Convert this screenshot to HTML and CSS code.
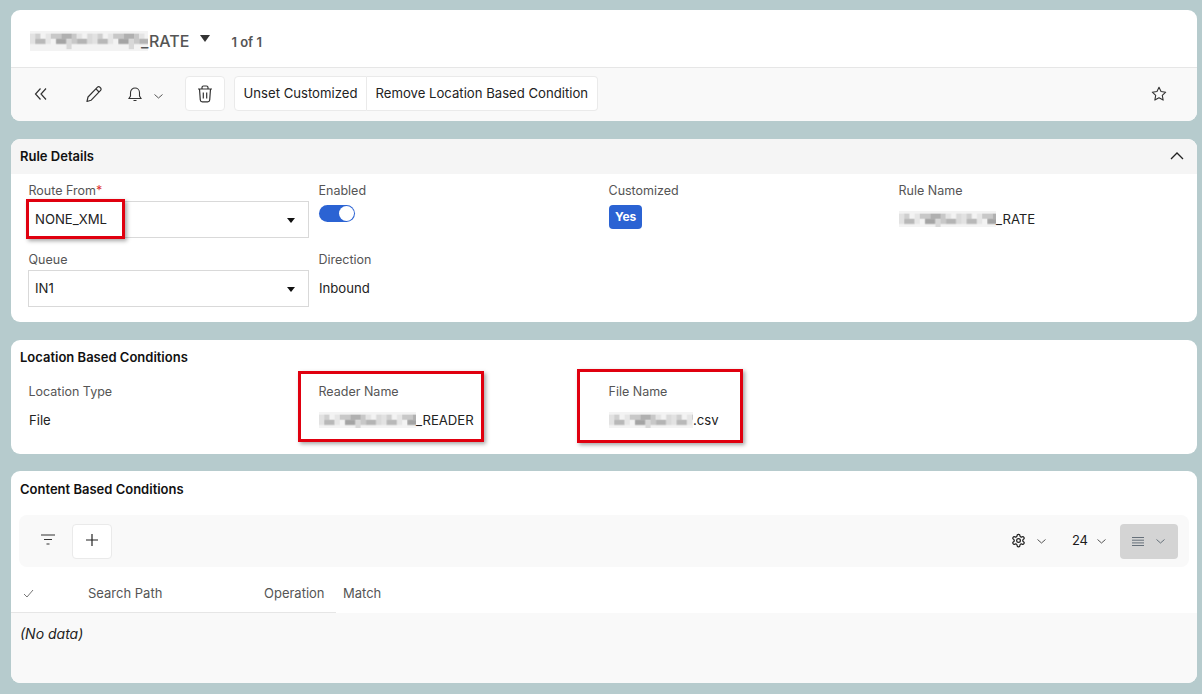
FILE: index.html
```html
<!DOCTYPE html>
<html lang="en">
<head>
  <meta charset="UTF-8">
  <title>Routing Rule</title>
  <link rel="stylesheet" href="styles.css">
</head>
<body>
  <svg class="defs" width="0" height="0" aria-hidden="true">
    <defs>
      <pattern id="mosaic" width="48" height="14" patternUnits="userSpaceOnUse" patternTransform="scale(1.3)">
        <rect width="48" height="14" fill="#f3f3f3"/>
        <rect x="0" y="2" width="4" height="8" fill="#e2e2e2"/>
        <rect x="4" y="2" width="4" height="4" fill="#cfcfcf"/>
        <rect x="4" y="6" width="8" height="4" fill="#b8b8b8"/>
        <rect x="12" y="2" width="4" height="8" fill="#e6e6e6"/>
        <rect x="16" y="2" width="8" height="4" fill="#c8c8c8"/>
        <rect x="20" y="6" width="8" height="4" fill="#a4a4a4"/>
        <rect x="24" y="2" width="8" height="4" fill="#b0b0b0"/>
        <rect x="28" y="6" width="4" height="8" fill="#d8d8d8"/>
        <rect x="32" y="2" width="4" height="8" fill="#c8c8c8"/>
        <rect x="36" y="2" width="4" height="4" fill="#e4e4e4"/>
        <rect x="36" y="6" width="8" height="4" fill="#b4b4b4"/>
        <rect x="44" y="2" width="4" height="8" fill="#dadada"/>
      </pattern>
    </defs>
  </svg>

  <section class="card title-card">
    <div class="title-row">
      <svg class="mosaic title-mosaic" width="118" height="20"><rect width="118" height="20" fill="url(#mosaic)"/></svg>
      <span class="title-text">_RATE</span>
      <svg class="title-caret" width="10" height="7" viewBox="0 0 10 7"><path d="M0 0h10L5 7z" fill="#333"/></svg>
      <span class="count">1 of 1</span>
    </div>
    <div class="toolbar">
      <button class="icon-plain back">
        <svg width="14" height="14" viewBox="0 0 14 14" fill="none" stroke="#333" stroke-width="1.2"><path d="M6.5 1.5 1.5 7l5 5.5M12 1.5 7 7l5 5.5"/></svg>
      </button>
      <button class="icon-plain edit">
        <svg width="18" height="18" viewBox="0 0 18 18" fill="none" stroke="#333" stroke-width="1.2" stroke-linejoin="round"><path d="M2 16.500 3 12 12.500 2.200a1.600 1.600 0 0 1 2.300 0l.8.800a1.600 1.600 0 0 1 0 2.300L6 15.300z"/><path d="M11 3.800 14 7"/></svg>
      </button>
      <button class="icon-plain bell">
        <svg width="14" height="16" viewBox="0 0 14 16" fill="none" stroke="#333" stroke-width="1.1"><path d="M1 12.500h12l-1.500-2.500V6.500a4.500 4.500 0 0 0-9 0V10z"/><path d="M5.500 14.500h3"/></svg>
        <svg class="chev" width="9" height="5" viewBox="0 0 9 5" fill="none" stroke="#555"><path d="m.5.500 4 3.500 4-3.500"/></svg>
      </button>
      <button class="btn trash">
        <svg width="16" height="18" viewBox="0 0 16 18" fill="none" stroke="#333" stroke-width="1.2"><path d="M1 4h14M5 4V2.500A1.500 1.500 0 0 1 6.500 1h3A1.500 1.500 0 0 1 11 2.500V4M2.500 4l.8 11a2 2 0 0 0 2 1.800h5.400a2 2 0 0 0 2-1.800l.8-11M6.300 7.500v6M9.700 7.500v6"/></svg>
      </button>
      <div class="btn-group">
        <button class="btn text-btn">Unset Customized</button>
        <button class="btn text-btn">Remove Location Based Condition</button>
      </div>
      <button class="icon-plain star">
        <svg width="16" height="16" viewBox="0 0 16 16" fill="none" stroke="#333" stroke-width="1.1" stroke-linejoin="round"><path d="m8 1.300 2.050 4.250 4.650.65-3.400 3.250.85 4.650L8 11.850 3.850 14.100l.85-4.650L1.300 6.200l4.650-.65z"/></svg>
      </button>
    </div>
  </section>

  <section class="card details-card">
    <header class="card-head">
      <h2>Rule Details</h2>
      <svg width="14" height="8" viewBox="0 0 14 8" fill="none" stroke="#222" stroke-width="1.300"><path d="m1 7 6-6 6 6"/></svg>
    </header>
    <div class="fields">
      <div class="field">
        <label>Route From<span class="req">*</span></label>
        <div class="select">NONE_XML<i class="caret"></i></div>
        <div class="mark mark-route"></div>
      </div>
      <div class="field">
        <label>Enabled</label>
        <div class="toggle"><span class="knob"></span></div>
      </div>
      <div class="field">
        <label>Customized</label>
        <span class="badge">Yes</span>
      </div>
      <div class="field">
        <label>Rule Name</label>
        <div class="value"><svg class="mosaic" width="97" height="16"><rect width="97" height="16" fill="url(#mosaic)"/></svg>_RATE</div>
      </div>
      <div class="field">
        <label>Queue</label>
        <div class="select">IN1<i class="caret"></i></div>
      </div>
      <div class="field">
        <label>Direction</label>
        <div class="value">Inbound</div>
      </div>
    </div>
  </section>

  <section class="card location-card">
    <h2 class="plain-head">Location Based Conditions</h2>
    <div class="fields">
      <div class="field">
        <label>Location Type</label>
        <div class="value">File</div>
      </div>
      <div class="field">
        <label>Reader Name</label>
        <div class="value"><svg class="mosaic" width="97" height="16"><rect width="97" height="16" fill="url(#mosaic)"/></svg>_READER</div>
        <div class="mark mark-reader"></div>
      </div>
      <div class="field">
        <label>File Name</label>
        <div class="value"><svg class="mosaic" width="84" height="16"><rect width="84" height="16" fill="url(#mosaic)"/></svg>.csv</div>
        <div class="mark mark-file"></div>
      </div>
    </div>
  </section>

  <section class="card content-card">
    <h2 class="plain-head">Content Based Conditions</h2>
    <div class="grid-bar">
      <svg class="filter" width="14" height="11" viewBox="0 0 14 11" fill="none" stroke="#333" stroke-width="1.200"><path d="M0 1h14M3 5.500h8M5.500 10h3"/></svg>
      <button class="btn add">
        <svg width="14" height="14" viewBox="0 0 14 14" fill="none" stroke="#222" stroke-width="1.200"><path d="M7 1v12M1 7h12"/></svg>
      </button>
      <div class="grid-tools">
        <svg class="raised" width="15" height="15" viewBox="0 0 24 24" fill="none" stroke="#222" stroke-width="2" stroke-linejoin="round"><path d="M12.220 2h-.44a2 2 0 0 0-2 2v.18a2 2 0 0 1-1 1.730l-.43.250a2 2 0 0 1-2 0l-.15-.080a2 2 0 0 0-2.730.730l-.22.380a2 2 0 0 0 .730 2.730l.150.100a2 2 0 0 1 1 1.720v.510a2 2 0 0 1-1 1.740l-.15.090a2 2 0 0 0-.730 2.730l.220.380a2 2 0 0 0 2.730.730l.150-.080a2 2 0 0 1 2 0l.430.250a2 2 0 0 1 1 1.730V20a2 2 0 0 0 2 2h.440a2 2 0 0 0 2-2v-.18a2 2 0 0 1 1-1.730l.430-.250a2 2 0 0 1 2 0l.150.080a2 2 0 0 0 2.730-.730l.220-.390a2 2 0 0 0-.730-2.730l-.15-.080a2 2 0 0 1-1-1.740v-.5a2 2 0 0 1 1-1.740l.150-.090a2 2 0 0 0 .730-2.730l-.22-.38a2 2 0 0 0-2.730-.730l-.15.080a2 2 0 0 1-2 0l-.43-.25a2 2 0 0 1-1-1.730V4a2 2 0 0 0-2-2z"/><circle cx="12" cy="12" r="3"/></svg>
        <svg class="chev gear-chev" width="9" height="5" viewBox="0 0 9 5" fill="none" stroke="#555"><path d="m.5.500 4 3.500 4-3.500"/></svg>
        <span class="page-size raised">24</span>
        <svg class="chev" width="9" height="5" viewBox="0 0 9 5" fill="none" stroke="#555"><path d="m.5.500 4 3.500 4-3.500"/></svg>
        <div class="density">
          <svg width="12" height="9" viewBox="0 0 12 9" fill="none" stroke="#66707a"><path d="M0 .5h12M0 3.200h12M0 5.900h12M0 8.500h12"/></svg>
          <svg class="chev" width="9" height="5" viewBox="0 0 9 5" fill="none" stroke="#66707a"><path d="m.5.500 4 3.500 4-3.500"/></svg>
        </div>
      </div>
    </div>
    <div class="table-head">
      <div class="col col-check"><svg width="11" height="9" viewBox="0 0 11 9" fill="none" stroke="#777"><path d="m1 5 3 3 6-7"/></svg></div>
      <div class="col col-path">Search Path</div>
      <div class="col col-op">Operation</div>
      <div class="col col-match">Match</div>
    </div>
    <div class="table-body">(No data)</div>
  </section>
</body>
</html>
```

FILE: styles.css
```css
* { box-sizing: border-box; }
html, body { height: 694px; overflow: hidden; }
body {
  margin: 0;
  padding: 10px 5px 0 11px;
  background: #b6cbcd;
  font-family: Inter, "Liberation Sans", sans-serif;
  font-size: 12.500px;
  color: #1c1c1c;
}
button {
  font: inherit;
  color: inherit;
  background: none;
  border: 0;
  padding: 0;
}
.defs { position: absolute; }
.card {
  background: #fff;
  border-radius: 9px;
  overflow: hidden;
}
h2 {
  margin: 0;
  font-size: 13px;
  font-weight: 600;
  color: #111;
}

/* title */
.title-card { height: 111px; }
.title-row {
  height: 58px;
  display: flex;
  align-items: center;
  padding: 4px 0 0 17px;
  border-bottom: 1px solid #e6e6e6;
}
.title-mosaic { margin-left: 2px; }
.title-text { font-size: 16px; font-weight: 500; color: #555; margin-left: -7px; }
.title-caret { margin: 0 0 5px 11px; }
.count { margin: 2px 0 0 21px; font-size: 13px; font-weight: 600; color: #555; }
.toolbar {
  height: 53px;
  display: flex;
  align-items: center;
  padding-left: 23px;
  padding-bottom: 2px;
  background: #f9f9f9;
}
.icon-plain { display: flex; align-items: center; }
.back { width: 51px; }
.edit { width: 43px; }
.bell { width: 57px; gap: 12px; }
.bell .chev { margin-top: 5px; }
.btn {
  display: flex;
  align-items: center;
  justify-content: center;
  background: #fff;
  border: 1px solid #eaeaea;
  border-radius: 4px;
}
.trash { width: 40px; height: 35px; margin-right: 9px; }
.btn-group { display: flex; }
.text-btn {
  height: 35px;
  padding: 0 8.500px 2px;
  font-size: 13.150px;
  color: #222;
}
.text-btn:first-child { border-radius: 4px 0 0 4px; }
.text-btn:last-child { border-radius: 0 4px 4px 0; border-left: 0; }
.star { margin-left: auto; margin-right: 30px; }

/* sections */
.details-card { height: 183px; margin-top: 18px; }
.card-head {
  height: 35px;
  display: flex;
  align-items: center;
  justify-content: space-between;
  padding: 0 13px 2px 9px;
  background: #f5f5f5;
}
.plain-head { padding: 10px 0 0 9px; line-height: 15px; }
.fields {
  display: grid;
  grid-template-columns: repeat(4, 290px);
  padding: 9px 0 0 17px;
}
.field { position: relative; height: 69px; padding-right: 9px; }
.field label { display: block; height: 16px; line-height: 16px; padding-left: .5px; color: #555; }
.req { color: #d33; }
.select {
  position: relative;
  height: 37px;
  margin-top: 2px;
  padding-left: 6px;
  line-height: 35px;
  font-size: 13.150px;
  border: 1px solid #d9d9d9;
  color: #222;
}
.caret {
  position: absolute;
  top: 16px;
  right: 13px;
  border: 4.500px solid transparent;
  border-top: 5px solid #111;
  border-bottom: 0;
}
.toggle {
  width: 36px;
  height: 17px;
  margin: 6px 0 0 1px;
  padding: 1px;
  display: flex;
  justify-content: flex-end;
  background: #2b63d3;
  border-radius: 9px;
}
.knob { width: 15px; height: 15px; background: #fff; border-radius: 50%; }
.badge {
  display: inline-block;
  margin: 6px 0 0 1px;
  padding: 0 6px;
  height: 24px;
  line-height: 24px;
  font-size: 12px;
  font-weight: 700;
  color: #fff;
  background: #2b63d3;
  border-radius: 4px;
}
.value {
  display: flex;
  align-items: center;
  height: 20px;
  margin-top: 10px;
  padding-left: 1px;
  font-size: 13.150px;
  color: #222;
}
.mosaic { flex: none; }

/* red annotations from the screenshot */
.mark {
  position: absolute;
  border: 3px solid #e0000f;
  box-shadow: 2px 2px 4px rgba(0, 0, 0, .35);
}
.mark-route { left: -2px; top: 16px; width: 99px; height: 40px; }
.mark-reader { left: -20px; top: -13px; width: 186px; height: 71px; }
.mark-file { left: -31px; top: -15px; width: 166px; height: 74px; }

.location-card { height: 114px; margin-top: 18px; }
.location-card .fields { padding-top: 19px; }

.content-card {
  height: 212px;
  margin-top: 17px;
  background: #fff;
}
.content-card .plain-head { padding-top: 11px; }
.grid-bar {
  height: 52px;
  margin: 18px 8px 0;
  padding: 0 11px 0 22px;
  display: flex;
  align-items: center;
  background: #f9f9f9;
  border-radius: 8px;
}
.filter { margin-bottom: 3px; }
.add { width: 40px; height: 35px; margin-left: 17px; padding-bottom: 3px; }
.grid-tools { margin-left: auto; display: flex; align-items: center; }
.raised { margin-bottom: 2px; }
.gear-chev { margin: 1px 26px 0 11px; }
.page-size { font-size: 13px; margin-right: 9px; }
.density {
  width: 58px;
  height: 35px;
  margin-left: 14px;
  padding-right: 2px;
  display: flex;
  align-items: center;
  justify-content: center;
  gap: 12px;
  background: #d4d4d4;
  border-radius: 4px;
}
.table-head {
  height: 46px;
  display: flex;
  align-items: center;
  font-size: 13px;
  color: #555;
}
.col {
  height: 100%;
  display: flex;
  align-items: center;
  padding-top: 7px;
  border-bottom: 1px solid #e6e6e6;
}
.col-check { width: 77px; padding-left: 12px; }
.col-path { width: 176px; }
.col-op { width: 72px; }
.col-match { padding-left: 7px; border-bottom-color: transparent; }
.table-body {
  height: 70px;
  padding: 12px 0 0 9px;
  font-size: 14px;
  font-style: italic;
  color: #222;
  background: #f9f9f9;
}
```
